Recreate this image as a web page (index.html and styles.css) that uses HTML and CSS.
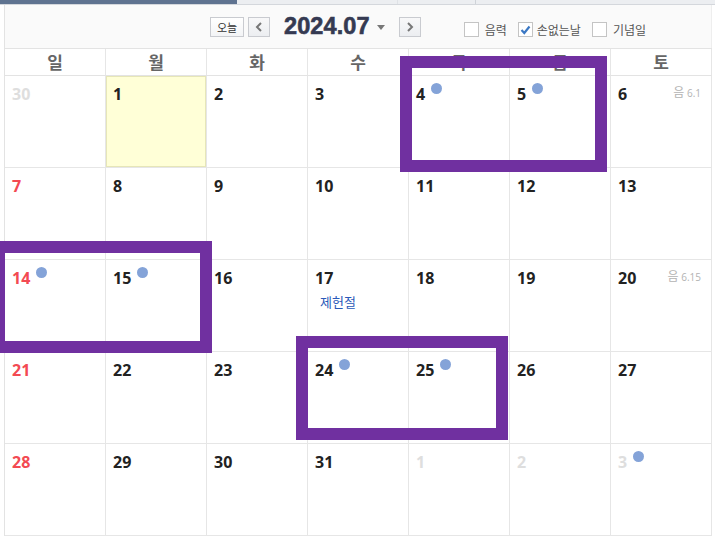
FILE: index.html
```html
<!DOCTYPE html>
<html lang="ko">
<head>
<meta charset="utf-8">
<link rel="stylesheet" href="styles.css">
</head>
<body>
<div class="strip">
  <div class="strip-dark"></div>
  <div class="strip-light"><span class="seg seg1"></span><span class="seg seg2"></span><span class="seg seg3"></span></div>
</div>
<div class="cal">
  <div class="toolbar">
    <button class="btn btn-today">오늘</button>
    <button class="btn btn-arrow"><svg width="8" height="10" viewBox="0 0 8 10"><path d="M6 1 L2 5 L6 9" fill="none" stroke="#777" stroke-width="2"/></svg></button>
    <span class="title">2024.07</span>
    <span class="caret"></span>
    <button class="btn btn-arrow btn-next"><svg width="8" height="10" viewBox="0 0 8 10"><path d="M2 1 L6 5 L2 9" fill="none" stroke="#777" stroke-width="2"/></svg></button>
    <label class="chk chk-first"><span class="box"></span>음력</label>
    <label class="chk"><span class="box checked"><svg width="11" height="10" viewBox="0 0 11 10"><path d="M1.5 5 L4.3 8 L9.5 1.5" fill="none" stroke="#3b78c4" stroke-width="2.2"/></svg></span>손없는날</label>
    <label class="chk"><span class="box"></span>기념일</label>
  </div>
  <div class="grid">
    <div class="dow">일</div><div class="dow">월</div><div class="dow">화</div><div class="dow">수</div><div class="dow">목</div><div class="dow">금</div><div class="dow">토</div>

    <div class="cell"><span class="num other">30</span></div>
    <div class="cell today"><span class="num">1</span></div>
    <div class="cell"><span class="num">2</span></div>
    <div class="cell"><span class="num">3</span></div>
    <div class="cell"><span class="num">4</span><span class="dot"></span></div>
    <div class="cell"><span class="num">5</span><span class="dot"></span></div>
    <div class="cell"><span class="num">6</span><span class="lunar"><span class="lk">음</span> 6.1</span></div>

    <div class="cell"><span class="num sun">7</span></div>
    <div class="cell"><span class="num">8</span></div>
    <div class="cell"><span class="num">9</span></div>
    <div class="cell"><span class="num">10</span></div>
    <div class="cell"><span class="num">11</span></div>
    <div class="cell"><span class="num">12</span></div>
    <div class="cell"><span class="num">13</span></div>

    <div class="cell"><span class="num sun">14</span><span class="dot"></span></div>
    <div class="cell"><span class="num">15</span><span class="dot"></span></div>
    <div class="cell"><span class="num">16</span></div>
    <div class="cell"><span class="num">17</span><div class="holiday">제헌절</div></div>
    <div class="cell"><span class="num">18</span></div>
    <div class="cell"><span class="num">19</span></div>
    <div class="cell"><span class="num">20</span><span class="lunar"><span class="lk">음</span> 6.15</span></div>

    <div class="cell"><span class="num sun">21</span></div>
    <div class="cell"><span class="num">22</span></div>
    <div class="cell"><span class="num">23</span></div>
    <div class="cell"><span class="num">24</span><span class="dot"></span></div>
    <div class="cell"><span class="num">25</span><span class="dot"></span></div>
    <div class="cell"><span class="num">26</span></div>
    <div class="cell"><span class="num">27</span></div>

    <div class="cell"><span class="num sun">28</span></div>
    <div class="cell"><span class="num">29</span></div>
    <div class="cell"><span class="num">30</span></div>
    <div class="cell"><span class="num">31</span></div>
    <div class="cell"><span class="num other">1</span></div>
    <div class="cell"><span class="num other">2</span></div>
    <div class="cell"><span class="num other">3</span><span class="dot"></span></div>
  </div>
</div>
<div class="mark mark1"></div>
<div class="mark mark2"></div>
<div class="mark mark3"></div>
</body>
</html>
```
FILE: styles.css
```css
* { box-sizing: border-box; }
html, body { margin: 0; padding: 0; background: #fff; }
body {
  width: 719px; height: 550px; overflow: hidden; position: relative;
  font-family: "Noto Sans CJK KR", "Noto Sans", sans-serif;
}
.strip { display: flex; height: 5px; width: 715px; border-bottom: 1px solid #d4d7dc; }
.strip-dark { width: 237px; background: #5f7390; }
.strip-light { flex: 1; background: #eceef1; display: flex; }
.seg { height: 100%; }
.seg1 { width: 161px; border-right: 1px solid #dfe2e6; }
.seg2 { width: 78px; border-right: 1px solid #cfd3d8; }
.seg3 { flex: 1; }

.cal { margin-left: 4px; width: 708px; border-left: 1px solid #e3e3e3; }
.toolbar {
  height: 43px; background: #fafafa; display: flex; align-items: center;
  padding-left: 205px; border-right: 1px solid #eee;
}
.btn {
  height: 20px; padding: 0; margin: 0; border: 1px solid #c9cbd0; background: linear-gradient(#fff, #f3f4f6);
  font-family: "Noto Sans CJK KR", sans-serif; font-size: 11px; color: #333; display: flex; align-items: center; justify-content: center;
}
.btn-today { width: 34px; margin-top: 1px; }
.btn-arrow { width: 22px; margin-left: 4px; margin-top: 1px; background: linear-gradient(#f8f8f9, #eceef1); }
.btn-next { margin-left: 14px; }
.title {
  font-family: "Liberation Sans", Arial, sans-serif; font-weight: bold; font-size: 23.5px; color: #353a52;
  margin-left: 14px; letter-spacing: 0.1px; line-height: 1; -webkit-text-stroke: 0.6px #353a52;
}
.caret {
  width: 0; height: 0; border-left: 4px solid transparent; border-right: 4px solid transparent; border-top: 5px solid #777;
  margin-left: 7px; margin-top: 2px;
}
.chk { display: flex; align-items: center; font-size: 12px; color: #555; margin-left: 11px; margin-top: 6px; }
.chk-first { margin-left: 43px; }
.box { width: 15px; height: 15px; border: 1px solid #c4c4c4; background: #fff; margin-right: 6px; display: flex; align-items: center; justify-content: center; }
.box.checked { margin-right: 4px; }

.grid {
  display: grid; grid-template-columns: repeat(7, 101px);
  grid-template-rows: 27px repeat(5, 92px);
  border-top: 1px solid #e3e3e3;
}
.dow {
  border-right: 1px solid #e6e6e6; border-bottom: 1px solid #e3e3e3;
  text-align: center; font-weight: bold; font-size: 17px; color: #666; line-height: 25px;
}
.cell {
  border-right: 1px solid #e6e6e6; border-bottom: 1px solid #e6e6e6;
  padding: 5px 10px 0 7px; position: relative;
}
.cell.today { background: #ffffd7; box-shadow: inset 0 0 0 1px #e6e6b8; }
.num {
  font-family: "Open Sans", "Noto Sans", sans-serif; font-weight: bold; font-size: 16px; color: #222; line-height: 22px;
}
.num.sun { color: #f34a52; }
.num.other { color: #dedede; }
.dot {
  display: inline-block; width: 11px; height: 11px; border-radius: 50%; background: #84a3d8;
  margin-left: 6px; vertical-align: 6px;
}
.lunar {
  position: absolute; right: 10px; top: 7px; font-family: "Open Sans", sans-serif; font-size: 10px; color: #b3b3b3;
}
.lunar .lk { font-family: "Noto Sans CJK KR", sans-serif; font-size: 12px; }
.holiday { font-size: 13px; color: #2a59b9; margin-left: 5px; margin-top: 3px; }

.mark { position: absolute; border: 12px solid #7030a0; }
.mark1 { left: 400px; top: 56px; width: 207px; height: 116px; }
.mark2 { left: -7px; top: 241px; width: 219px; height: 112px; }
.mark3 { left: 296px; top: 336px; width: 212px; height: 104px; }
```
